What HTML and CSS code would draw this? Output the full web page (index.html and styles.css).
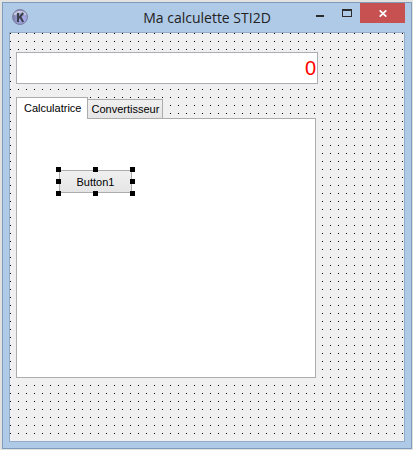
FILE: index.html
```
<!DOCTYPE html>
<html lang="fr">
  <head>
    <meta charset="UTF-8" />
    <meta name="viewport" content="width=device-width, initial-scale=1.0" />
    <title>Ma calculette STI2D</title>
    <link rel="stylesheet" href="styles.css">
  </head>
  <body>
    <div class="window">
      <div class="titlebar">
        <svg class="app-icon" width="16" height="16" viewBox="0 0 16 16">
          <defs>
            <radialGradient id="ball" cx="0.7" cy="0.65" r="0.7">
              <stop offset="0" stop-color="#a9aef0" />
              <stop offset="0.6" stop-color="#9297cc" />
              <stop offset="1" stop-color="#7d80a6" />
            </radialGradient>
          </defs>
          <circle cx="8" cy="8" r="7.5" fill="url(#ball)" stroke="#7d82a4" />
          <path d="M2.5 6a6 5 0 0 1 11 0" fill="none" stroke="#c3c6dc" stroke-width="2.4" />
          <path d="M6 4v9M11.2 4L7 9M8 7.5l3.2 5.5" fill="none" stroke="#3c3f4c" stroke-width="2" />
        </svg>
        <h1 class="title">Ma calculette STI2D</h1>
        <div class="window-buttons">
          <button class="win-btn" aria-label="Réduire">
            <svg width="10" height="8" viewBox="0 0 10 8"><path d="M1 6h8v2H1z" fill="#2b2b2b" /></svg>
          </button>
          <button class="win-btn" aria-label="Agrandir">
            <svg width="10" height="8" viewBox="0 0 10 8"><path d="M0 0h10v8H0zM1 2v5h8V2z" fill="#2b2b2b" fill-rule="evenodd" /></svg>
          </button>
          <button class="win-btn win-close" aria-label="Fermer">
            <svg width="8" height="7" viewBox="0 0 8 7"><path d="M0.7 0.3l6.6 6.4M7.3 0.3L0.7 6.7" stroke="#fff" stroke-width="1.7" /></svg>
          </button>
        </div>
      </div>

      <div class="form">
        <input class="display" type="text" value="0" aria-label="Affichage" />

        <div class="tabs" role="tablist">
          <button class="tab active" id="tab-calc" role="tab" aria-selected="true" aria-controls="page-calc">Calculatrice</button>
          <button class="tab" role="tab" aria-selected="false">Convertisseur</button>
        </div>

        <div class="page" id="page-calc" role="tabpanel" aria-labelledby="tab-calc">
          <div class="selection">
            <button class="btn">Button1</button>
            <span class="handle top left"></span>
            <span class="handle top center"></span>
            <span class="handle top right"></span>
            <span class="handle middle left"></span>
            <span class="handle middle right"></span>
            <span class="handle bottom left"></span>
            <span class="handle bottom center"></span>
            <span class="handle bottom right"></span>
          </div>
        </div>
      </div>
    </div>
  </body>
</html>
```
FILE: styles.css
```
* {
  box-sizing: border-box;
}
body {
  display: flex;
  min-height: 100vh;
  margin: 0;
  padding: 2px 1px 1px 2px;
  background: #e2e2e0;
  font-family: "Liberation Sans", Arial, sans-serif;
  font-size: 11px;
  color: #000;
}
button {
  margin: 0;
  padding: 0;
  border: none;
  background: none;
  font: inherit;
  color: inherit;
}

/* window frame */
.window {
  flex: 1;
  display: flex;
  flex-direction: column;
  padding: 0 6px 6px;
  border: 1px solid #7f9bbb;
  background: #afcae7;
}
.titlebar {
  display: grid;
  grid-template-columns: 99px 1fr 99px;
  height: 29px;
}
.app-icon {
  margin: 6px 0 0 3px;
}
.title {
  margin: 0;
  font-family: "Open Sans", "Segoe UI", sans-serif;
  font-size: 14px;
  font-weight: 400;
  line-height: 29px;
  text-align: center;
  white-space: nowrap;
  color: #222;
}
.window-buttons {
  display: flex;
  justify-content: flex-end;
  align-items: flex-start;
}
.win-btn {
  display: flex;
  justify-content: center;
  width: 27px;
  height: 20px;
  padding-top: 6px;
}
.win-close {
  width: 45px;
  padding-top: 7px;
  background: #c75050;
}

/* form with the designer grid */
.form {
  flex: 1;
  display: flex;
  flex-direction: column;
  padding: 19px 88px 63px 6px;
  border: 1px solid #91abc9;
  background: #f0f0f0 conic-gradient(from 270deg at 1px 1px, #000 90deg, transparent 0) 0 0 / 8px 8px;
}
.display {
  height: 32px;
  margin: 0 -2px 13px 0;
  padding: 0 1px;
  border: 1px solid #abadb3;
  background: #fff;
  font: 20px "Liberation Sans", Arial, sans-serif;
  text-align: right;
  color: #f00;
}

/* tabs */
.tabs {
  display: flex;
  align-items: flex-end;
}
.tab {
  height: 19px;
  padding: 0 3px;
  border: 1px solid #acacac;
  border-width: 1px 1px 0 0;
  background: linear-gradient(#f0f0f0, #e5e5e5);
}
.tab.active {
  position: relative;
  height: 22px;
  margin-bottom: -1px;
  padding: 0 6px 2px 7px;
  border-left-width: 1px;
  background: #fff;
}
.page {
  flex: 1;
  padding: 50px 41px;
  border: 1px solid #acacac;
  background: #fff;
}

/* selected component */
.selection {
  position: relative;
  width: 75px;
  height: 25px;
  padding: 1px;
}
.btn {
  width: 100%;
  height: 100%;
  border: 1px solid #acacac;
  background: linear-gradient(#f0f0f0, #e5e5e5);
}
.handle {
  position: absolute;
  width: 5px;
  height: 5px;
  background: #000;
}
.top {
  top: -2px;
}
.middle {
  top: 10px;
}
.bottom {
  bottom: -2px;
}
.left {
  left: -2px;
}
.center {
  left: 35px;
}
.right {
  right: -2px;
}
```
